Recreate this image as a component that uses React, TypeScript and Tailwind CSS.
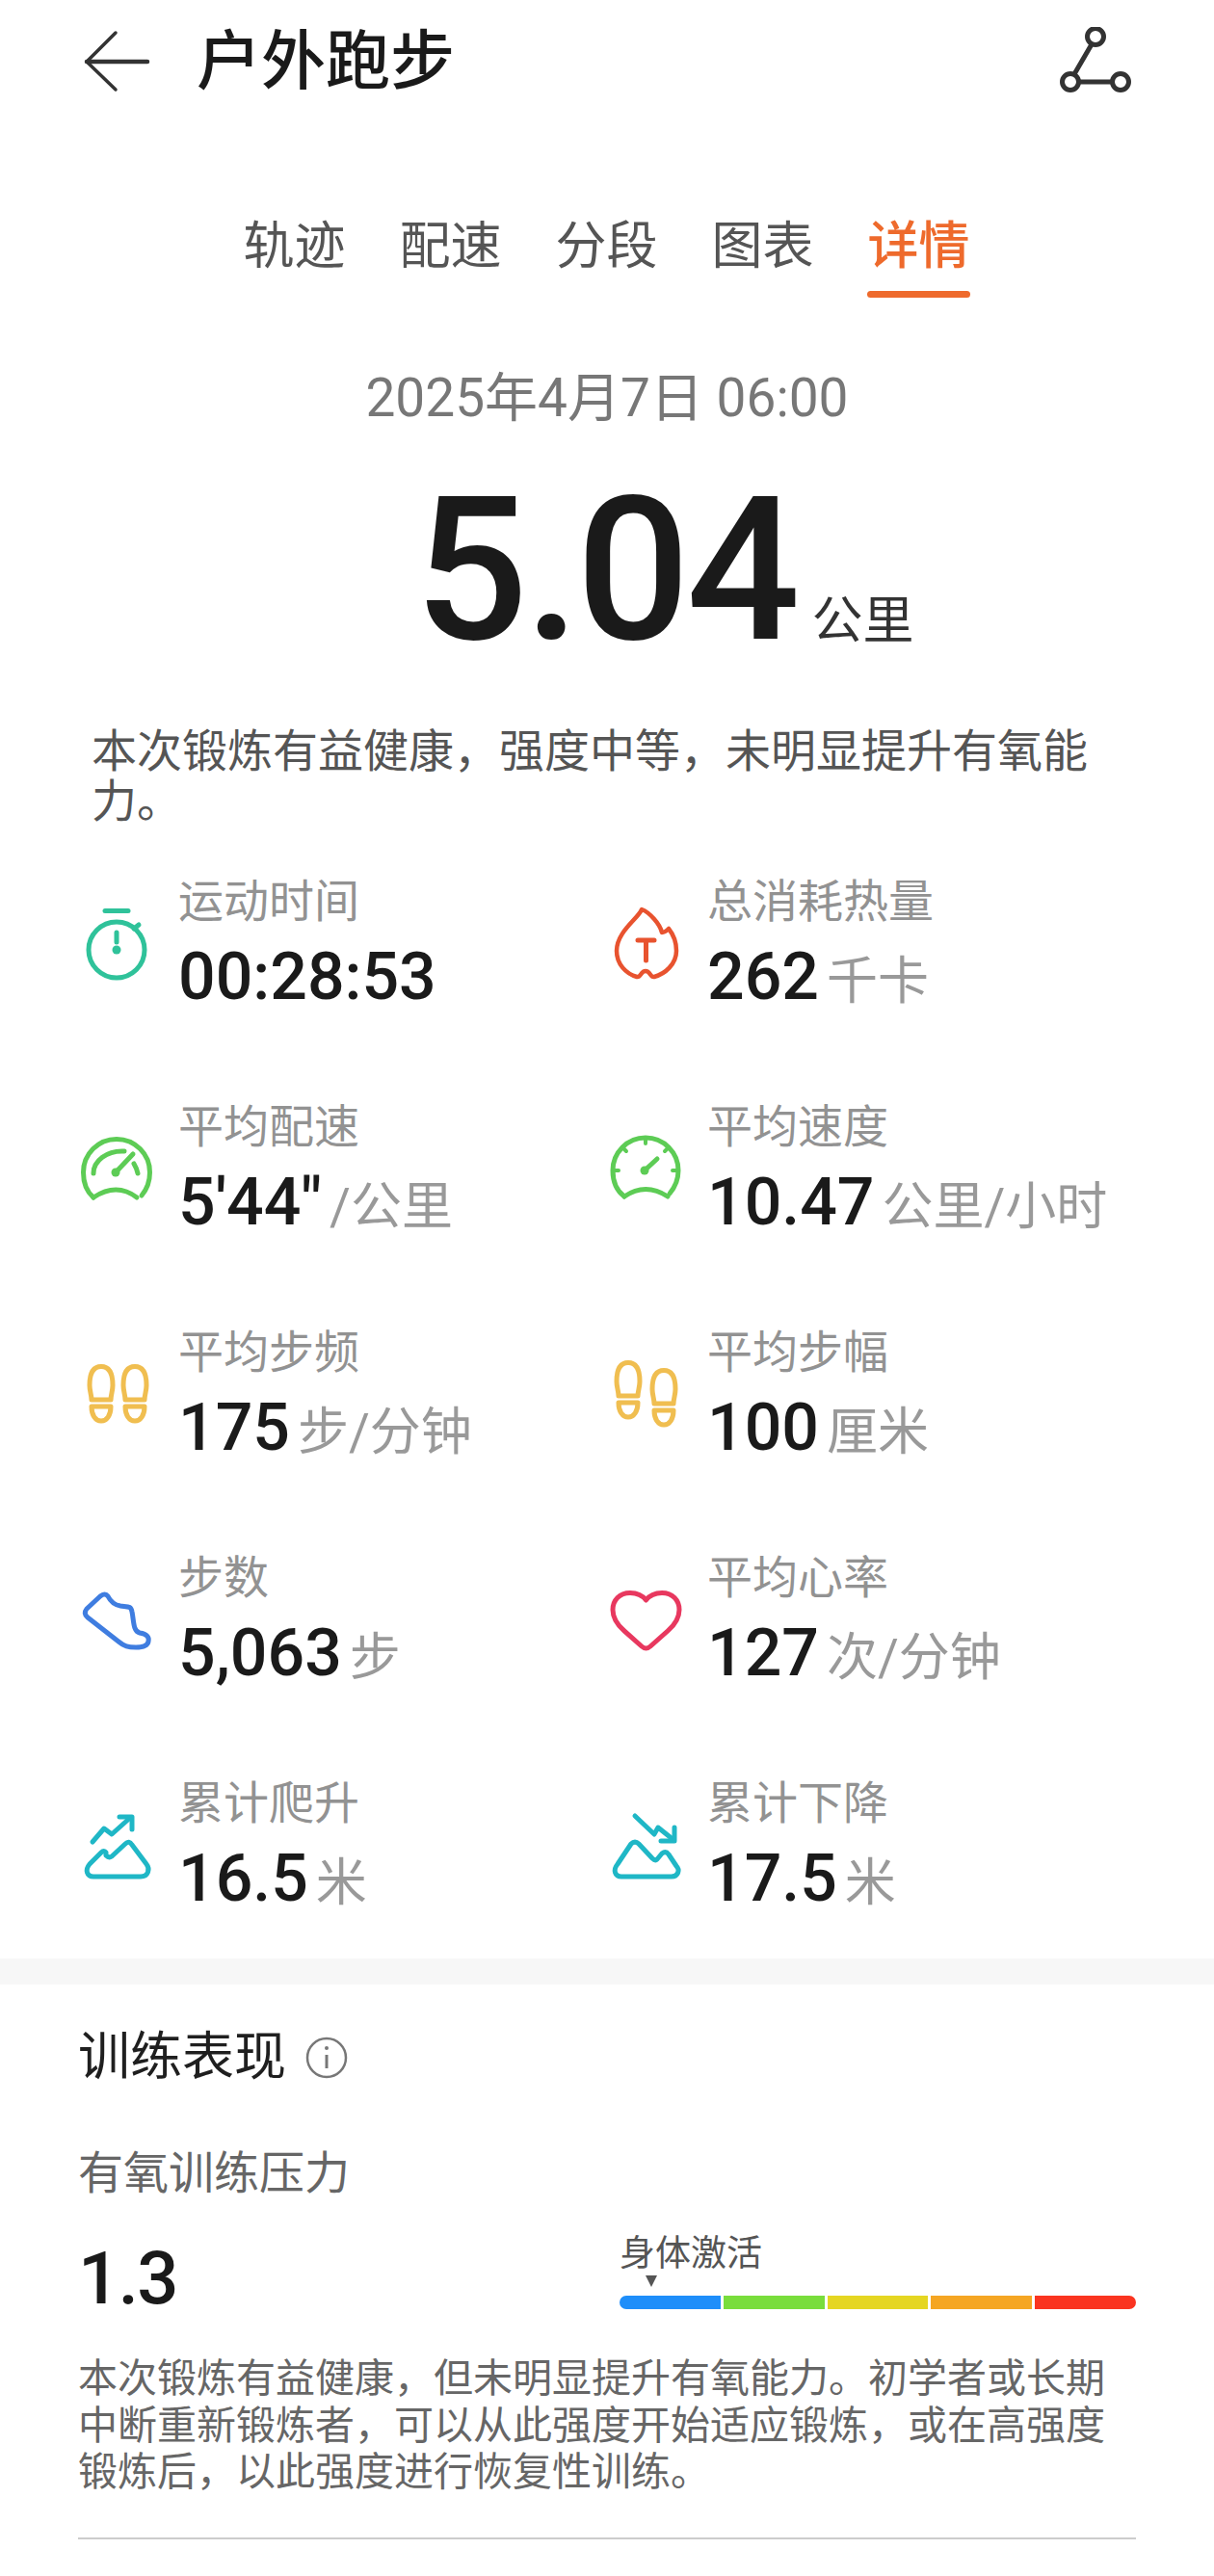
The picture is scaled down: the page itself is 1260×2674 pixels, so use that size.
import React from "react";

const C = ({ children, color, w = 4.5 }: { children: React.ReactNode; color: string; w?: number }) => (
  <svg width="80" height="80" viewBox="0 0 80 80" fill="none" stroke={color} strokeWidth={w} strokeLinecap="round" strokeLinejoin="round" className="shrink-0 self-center">
    {children}
  </svg>
);

const Foot = ({ dx, dy }: { dx: number; dy: number }) => (
  <g transform={`translate(${dx} ${dy})`}>
    <path d="M11 29C11 15 16 9.500 23 9.500C30 9.500 35 15 35 29C35 35 33 39 33 44L13 44C13 39 11 35 11 29Z" />
    <path d="M13 51L33 51C33 60 29 66 23 66C17 66 13 60 13 51Z" />
  </g>
);

const icons = {
  watch: (
    <C color="#2fc29a" w={5}>
      <circle cx="40" cy="45" r="29" />
      <path d="M28 4.500H52" />
      <path d="M40 27V37" />
      <path d="M58 23L63 19" />
      <circle cx="40" cy="45" r="4.500" fill="#2fc29a" stroke="none" />
    </C>
  ),
  flame: (
    <C color="#e8532f">
      <path d="M36 3C33 12 10 26 10 46C10 60 20 70 31 73C35 74 35 67 40 67C45 67 45 74 49 73C60 70 72 60 72 46C72 36 68 28 64 23C62 25 60 27 57 27C55 18 44 6 36 3Z" />
      <path d="M32 35H49M40.500 35V56" strokeWidth="5" />
    </C>
  ),
  gauge1: (
    <C color="#5dcc55" w={5}>
      <path d="M16 68C9 62 5.500 52 5.500 42A34.500 34.500 0 0 1 74.500 42C74.500 52 71 60 66 66" />
      <path d="M16 68Q40 52 61 68" />
      <path d="M16 43C16 30 30 19 48 20M58 33Q61 38 62 43" />
      <path d="M39 42L57 23" />
      <circle cx="39" cy="42" r="4.500" fill="#5dcc55" stroke="none" />
    </C>
  ),
  gauge2: (
    <C color="#5dcc55" w={5}>
      <path d="M18 67C10 61 6 51 6 40A34 34 0 0 1 74 40C74 50 70 58 65 64" />
      <path d="M18 67Q40 52 63 67" />
      <path d="M40 6V12M16 16L20 20M64 16L60 20M6 40H12M74 40H68" strokeWidth="4" />
      <path d="M39 40L52 28" />
      <circle cx="39" cy="40" r="4.500" fill="#5dcc55" stroke="none" />
    </C>
  ),
  feet1: (
    <C color="#f0be50" w={5}>
      <Foot dx={1} dy={0} />
      <Foot dx={36} dy={0} />
    </C>
  ),
  feet2: (
    <C color="#f0be50" w={5}>
      <Foot dx={-1} dy={-4} />
      <Foot dx={36} dy={4} />
    </C>
  ),
  shoe: (
    <C color="#3f7de0" w={5}>
      <path d="M9 27L23 14Q28 10 31 14C34 20 38 23 44 24C52 25 55 24 56 30C58 40 57 50 64 52C72 53 74 57 73 61C72 66 67 67 60 67C52 67 48 66 42 61L10 36Q5 32 9 27Z" />
    </C>
  ),
  heart: (
    <C color="#e8385f" w={5}>
      <path d="M40.500 18C36 12 30 10.500 24 10.500C13 10.500 6 18 6 28C6 37 11 44 18 50L36 66Q40.500 70 45 66L63 50C70 44 75 37 75 28C75 18 68 10.500 57 10.500C51 10.500 45 12 40.500 18Z" />
    </C>
  ),
  up: (
    <C color="#1fb7c6" w={5}>
      <path d="M16 71H65C73 71 75 63 71 58L56 38Q53 33 49 37L35 50Q32 52 29 49L29 46Q27 43 24 46L12 58C7 64 9 71 16 71Z" />
      <path d="M15 35L27 21L35 27L54 10" />
      <path d="M43 9H56V22" />
    </C>
  ),
  down: (
    <C color="#1fb7c6" w={5}>
      <path d="M15 71H67C74 71 76 64 72 60L64 48Q61 44 57 47L52 53Q50 55 47 52L33 37Q29 33 25 37L11 58C6 64 8 71 15 71Z" />
      <path d="M29 8L49 27L53 20L68 32" />
      <path d="M70 20V34H56" />
    </C>
  ),
};

const stats: { icon: React.ReactNode; label: string; value: string; unit: string }[] = [
  { icon: icons.watch, label: "运动时间", value: "00:28:53", unit: "" },
  { icon: icons.flame, label: "总消耗热量", value: "262", unit: "千卡" },
  { icon: icons.gauge1, label: "平均配速", value: "5'44\"", unit: "/公里" },
  { icon: icons.gauge2, label: "平均速度", value: "10.47", unit: "公里/小时" },
  { icon: icons.feet1, label: "平均步频", value: "175", unit: "步/分钟" },
  { icon: icons.feet2, label: "平均步幅", value: "100", unit: "厘米" },
  { icon: icons.shoe, label: "步数", value: "5,063", unit: "步" },
  { icon: icons.heart, label: "平均心率", value: "127", unit: "次/分钟" },
  { icon: icons.up, label: "累计爬升", value: "16.5", unit: "米" },
  { icon: icons.down, label: "累计下降", value: "17.5", unit: "米" },
];

const tabs = ["轨迹", "配速", "分段", "图表", "详情"];

export default function App() {
  return (
    <div className="w-[1260px] h-[2674px] overflow-hidden bg-white font-['Roboto','Noto_Sans_CJK_SC',sans-serif]">
      <header className="h-[128px] flex items-center pl-[86px] pr-[84px]">
        <svg width="70" height="70" viewBox="0 0 70 70" fill="none" stroke="#333" strokeLinecap="round" strokeLinejoin="round" className="shrink-0">
          <path d="M34 5L4 35L34 64" strokeWidth="3.500" />
          <path d="M4 35H67" strokeWidth="4.500" />
        </svg>
        <h1 className="ml-[48px] text-[67px] leading-[80px] font-medium text-[#1a1a1a]">户外跑步</h1>
        <svg width="80" height="72" viewBox="0 0 80 72" fill="none" stroke="#333" strokeWidth="5" className="ml-auto shrink-0">
          <circle cx="41" cy="10" r="8.500" />
          <circle cx="15" cy="57" r="8.500" />
          <circle cx="67" cy="57" r="8.500" />
          <path d="M37 18L19 49M24 57H58" />
        </svg>
      </header>

      <nav className="mt-[93px] flex justify-center gap-[55px] pr-[1px]">
        {tabs.map((t) => (
          <div key={t} className="flex flex-col items-center">
            <span className={`text-[53px] leading-[70px] ${t === "详情" ? "text-[#ee6a2c] font-medium" : "text-[#555555]"}`}>{t}</span>
            <span className={`mt-[11px] h-[7px] w-[107px] rounded-full ${t === "详情" ? "bg-[#ee6a2c]" : "bg-transparent"}`} />
          </div>
        ))}
      </nav>

      <p className="mt-[69px] text-center text-[55px] leading-[70px] text-[#777777]">2025年4月7日 06:00</p>

      <div className="mt-[36px] pl-[430px] flex items-baseline">
        <span className="text-[208px] leading-[216px] font-medium tracking-[-4px] text-[#1a1a1a]">5.04</span>
        <span className="ml-[16px] text-[53px] text-[#333333]">公里</span>
      </div>

      <p className="mt-[54px] ml-[95px] w-[1060px] text-[47px] leading-[52px] text-[#555555]">本次锻炼有益健康，强度中等，未明显提升有氧能力。</p>

      <div className="mt-[48px] ml-[81px] grid grid-cols-[549px_548px] gap-y-[84px]">
        {stats.map((s) => (
          <div key={s.label} className="flex items-start gap-[24px] h-[150px]">
            {s.icon}
            <div className="flex flex-col">
              <span className="text-[47px] leading-[60px] text-[#929292]">{s.label}</span>
              <div className="mt-[6px] flex items-baseline">
                <span className="text-[68px] leading-[84px] font-medium text-[#1a1a1a]">{s.value}</span>
                {s.unit && <span className="ml-[8px] text-[53px] leading-[84px] text-[#999999]">{s.unit}</span>}
              </div>
            </div>
          </div>
        ))}
      </div>

      <div className="mt-[41px] h-[27px] bg-[#f7f7f7]" />

      <section className="pt-[41px] px-[81px]">
        <div className="flex items-center">
          <h2 className="text-[54px] leading-[70px] font-normal text-[#1f1f1f]">训练表现</h2>
          <svg width="44" height="44" viewBox="0 0 44 44" fill="none" stroke="#777" className="ml-[20px]">
            <circle cx="22" cy="22" r="20" strokeWidth="2.500" />
            <path d="M22 19V33" strokeWidth="3" />
            <circle cx="22" cy="12" r="2" fill="#777" stroke="none" />
          </svg>
        </div>
        <p className="mt-[55px] text-[47px] leading-[60px] text-[#666666]">有氧训练压力</p>
        <div className="mt-[30px] flex">
          <span className="mt-[9px] w-[562px] text-[76px] leading-[80px] font-medium tracking-[-1.500px] text-[#1a1a1a]">1.3</span>
          <div className="w-[536px]">
            <p className="text-[37px] leading-[48px] text-[#555555]">身体激活</p>
            <svg width="14" height="14" viewBox="0 0 14 14" className="ml-[26px] -mt-[2px] block">
              <path d="M1 0H13L7 12Z" fill="#555" />
            </svg>
            <div className="mt-[7px] flex gap-[3px] h-[14px]">
              <div className="flex-1 rounded-l-full bg-[#1e8efa]" />
              <div className="flex-1 bg-[#79dd3c]" />
              <div className="flex-1 bg-[#e5d622]" />
              <div className="flex-1 bg-[#f5a623]" />
              <div className="flex-1 rounded-r-full bg-[#fa3420]" />
            </div>
          </div>
        </div>
        <p className="mt-[40px] w-[1090px] text-[41px] leading-[48.500px] text-[#666666]">本次锻炼有益健康，但未明显提升有氧能力。初学者或长期中断重新锻炼者，可以从此强度开始适应锻炼，或在高强度锻炼后，以此强度进行恢复性训练。</p>
        <div className="mt-[43px] h-[2px] bg-[#cccccc]" />
      </section>
    </div>
  );
}
